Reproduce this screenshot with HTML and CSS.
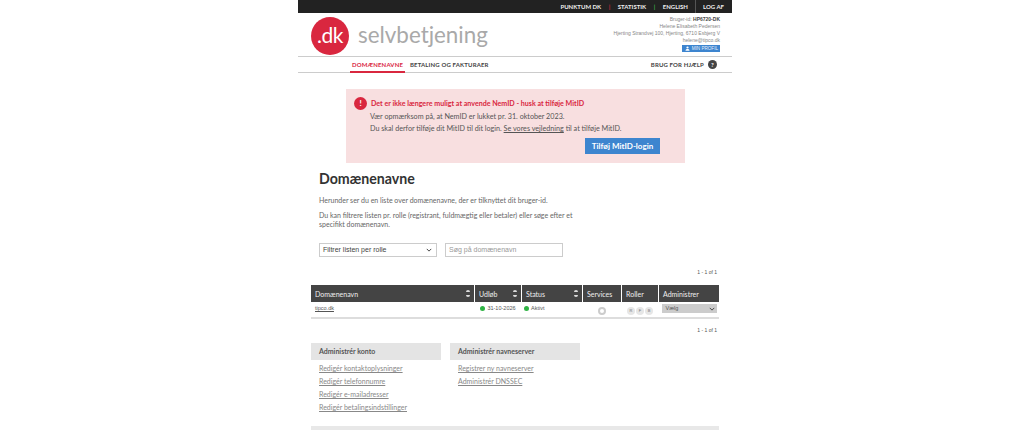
FILE: index.html
```html
<!DOCTYPE html>
<html lang="da">
<head>
    <meta charset="UTF-8">
    <title>Domænenavne - selvbetjening</title>
    <link rel="stylesheet" href="styles.css">
</head>
<body>
    <div class="page">
        <div class="topbar">
            <a href="#">PUNKTUM DK</a><span class="sep sep-red">|</span>
            <a href="#">STATISTIK</a><span class="sep sep-green">|</span>
            <a href="#">ENGLISH</a>
            <a href="#" class="logoff">LOG AF</a>
        </div>

        <div class="header">
            <div class="logo">.dk</div>
            <div class="brand">selvbetjening</div>
            <div class="user">
                <div>Bruger-id: <b>HP6720-DK</b></div>
                <div>Helene Elisabeth Pedersen</div>
                <div>Hjerting Strandvej 100, Hjerting, 6710 Esbjerg V</div>
                <div>helene@tipco.dk</div>
                <a href="#" class="profile">
                    <svg viewBox="0 0 10 10"><circle cx="5" cy="3" r="2.2"/><path d="M1 9.5c0-2.5 1.5-3.5 4-3.5s4 1 4 3.5z"/></svg>
                    MIN PROFIL
                </a>
            </div>
        </div>

        <div class="nav">
            <a href="#" class="active">DOMÆNENAVNE</a>
            <a href="#">BETALING OG FAKTURAER</a>
            <a href="#" class="help">BRUG FOR HJÆLP <span class="help-icon">?</span></a>
        </div>

        <div class="alert">
            <div class="alert-title"><span class="alert-icon">!</span>Det er ikke længere muligt at anvende NemID - husk at tilføje MitID</div>
            <p>Vær opmærksom på, at NemID er lukket pr. 31. oktober 2023.</p>
            <p>Du skal derfor tilføje dit MitID til dit login. <a href="#">Se vores vejledning</a> til at tilføje MitID.</p>
            <div class="alert-actions"><a href="#" class="btn">Tilføj MitID-login</a></div>
        </div>

        <div class="intro">
            <h1>Domænenavne</h1>
            <p>Herunder ser du en liste over domænenavne, der er tilknyttet dit bruger-id.</p>
            <p>Du kan filtrere listen pr. rolle (registrant, fuldmægtig eller betaler) eller søge efter et specifikt domænenavn.</p>
            <div class="filters">
                <div class="filter-select">Filtrer listen per rolle
                    <svg viewBox="0 0 8 5"><path d="M1 1l3 3 3-3" fill="none" stroke="#444" stroke-width="1.3"/></svg>
                </div>
                <div class="filter-input">Søg på domænenavn</div>
            </div>
        </div>

        <div class="pager pager-top">1 - 1 of 1</div>

        <div class="domains">
            <div class="row head">
                <div class="cell">Domænenavn<span class="sort"></span></div>
                <div class="cell">Udløb<span class="sort"></span></div>
                <div class="cell">Status<span class="sort"></span></div>
                <div class="cell">Services</div>
                <div class="cell">Roller</div>
                <div class="cell">Administrer</div>
            </div>
            <div class="row body">
                <div class="cell"><a href="#">tipco.dk</a></div>
                <div class="cell center"><span class="dot"></span>31-10-2026</div>
                <div class="cell"><span class="dot"></span>Aktivt</div>
                <div class="cell center"><span class="service"></span></div>
                <div class="cell center roles"><span>R</span><span>F</span><span>B</span></div>
                <div class="cell center"><div class="choose">Vælg
                    <svg viewBox="0 0 8 5"><path d="M1 1l3 3 3-3" fill="none" stroke="#444" stroke-width="1.3"/></svg>
                </div></div>
            </div>
        </div>

        <div class="pager pager-bottom">1 - 1 of 1</div>

        <div class="admin">
            <div class="admin-col">
                <h2>Administrér konto</h2>
                <a href="#">Redigér kontaktoplysninger</a>
                <a href="#">Redigér telefonnumre</a>
                <a href="#">Redigér e-mailadresser</a>
                <a href="#">Redigér betalingsindstillinger</a>
            </div>
            <div class="admin-col">
                <h2>Administrér navneserver</h2>
                <a href="#">Registrer ny navneserver</a>
                <a href="#">Administrér DNSSEC</a>
            </div>
        </div>

        <div class="footer-band"></div>
    </div>
</body>
</html>
```

FILE: styles.css
```css
* {
    margin: 0;
    padding: 0;
    box-sizing: border-box;
}

html, body {
    height: 430px;
    overflow: hidden;
}

body {
    background-color: #fff;
    color: #555;
    font-family: Lato, "Liberation Sans", sans-serif;
}

a {
    color: inherit;
}

.page {
    width: 434px;
    margin-left: 298px;
    height: 430px;
    overflow: hidden;
}

/* Top bar */
.topbar {
    height: 13px;
    background-color: #222;
    color: #eee;
    display: flex;
    justify-content: flex-end;
    align-items: center;
    font-size: 6px;
    font-weight: 700;
}

.topbar a {
    text-decoration: none;
}

.sep {
    margin: 0 7.5px;
}

.sep-red {
    color: #d9273f;
}

.sep-green {
    color: #3fae49;
}

.logoff {
    border-left: 1px solid #555;
    margin-left: 7px;
    padding: 3px 8px 3px 7px;
    line-height: 7px;
}

/* Header */
.header {
    height: 43px;
    display: flex;
    padding-left: 13px;
}

.logo {
    width: 38px;
    height: 38px;
    margin-top: 4px;
    border-radius: 50%;
    background-color: #d9273f;
    color: #fff;
    font-size: 21px;
    line-height: 35px;
    text-align: center;
    letter-spacing: -0.5px;
}

.brand {
    margin: 5px 0 0 9px;
    color: #a9a9a9;
    font-size: 22.4px;
    line-height: 34px;
}

.user {
    margin-left: auto;
    padding: 3px 12px 0 0;
    font-family: "Liberation Sans", sans-serif;
    font-size: 5px;
    line-height: 7px;
    text-align: right;
    color: #888;
}

.user b {
    color: #444;
}

.profile {
    display: inline-flex;
    align-items: center;
    gap: 2px;
    height: 7px;
    margin-top: 1px;
    padding: 0 2px 0 3px;
    background-color: #3d85cf;
    color: #e6effa;
    font-size: 4.6px;
    text-decoration: none;
}

.profile svg {
    width: 5px;
    height: 5px;
    fill: #fff;
}

/* Nav */
.nav {
    height: 17px;
    border-top: 1px solid #ccc;
    border-bottom: 1px solid #ccc;
    display: flex;
    align-items: stretch;
    padding-left: 52px;
    font-size: 6px;
    font-weight: 700;
    letter-spacing: 0.15px;
    color: #444;
}

.nav a {
    display: flex;
    align-items: center;
    text-decoration: none;
    margin-right: 5px;
}

.nav a.active {
    color: #d9273f;
    border-bottom: 2px solid #d9273f;
    margin-bottom: -1px;
    padding-top: 1px;
    width: 55px;
    justify-content: center;
}

.nav a.help {
    margin: 0 15px 0 auto;
}

.help-icon {
    width: 9px;
    height: 9px;
    margin-left: 4px;
    border-radius: 50%;
    background-color: #444;
    color: #fff;
    font-size: 6px;
    line-height: 9px;
    text-align: center;
}

/* Alert */
.alert {
    width: 339px;
    height: 74px;
    margin: 16px 0 0 48px;
    padding: 8px 8px 0 8px;
    background-color: #f8dfe0;
    font-size: 7.2px;
    color: #555;
}

.alert-title {
    display: flex;
    align-items: center;
    color: #d9273f;
    font-weight: 700;
    height: 13px;
    margin-bottom: 1px;
    font-size: 7.1px;
}

.alert-icon {
    width: 13px;
    height: 13px;
    margin-right: 4px;
    border-radius: 50%;
    background-color: #d9273f;
    color: #fff;
    font-size: 8px;
    line-height: 13px;
    text-align: center;
}

.alert p {
    margin-left: 16px;
    line-height: 12px;
}

.alert-actions {
    margin-top: 3px;
    padding-left: 231px;
}

.btn {
    display: block;
    width: 75px;
    height: 16px;
    background-color: #3d85cf;
    color: #fff;
    font-size: 8px;
    font-weight: 700;
    line-height: 16px;
    text-align: center;
    text-decoration: none;
}

/* Intro */
.intro {
    margin: 7px 0 0 21px;
    width: 270px;
    font-size: 7px;
    line-height: 9px;
    color: #666;
}

.intro h1 {
    color: #333;
    font-size: 14.2px;
    line-height: 18px;
    margin-bottom: 8px;
}

.intro p {
    margin-bottom: 6px;
}

.filters {
    display: flex;
    gap: 8px;
    margin-top: 14px;
    font-family: "Liberation Sans", sans-serif;
}

.filter-select, .filter-input {
    height: 14px;
    border: 1px solid #ccc;
    padding-left: 3px;
    line-height: 12px;
}

.filter-select {
    width: 118px;
    display: flex;
    justify-content: space-between;
    align-items: center;
    padding-right: 4px;
    color: #444;
}

.filter-select svg, .choose svg {
    width: 6px;
    height: 4px;
}

.filter-input {
    width: 118px;
    color: #999;
}

/* Table */
.pager {
    font-family: "Liberation Sans", sans-serif;
    font-size: 5px;
    line-height: 7px;
    color: #555;
    text-align: right;
    padding-right: 15px;
}

.pager-top {
    margin-top: 12px;
}

.pager-bottom {
    margin-top: 8px;
}

.domains {
    margin: 9px 13px 0 13px;
    border-bottom: 2px solid #ddd;
}

.row {
    display: grid;
    grid-template-columns: 163px 46px 60px 38px 36px 1fr;
    column-gap: 1px;
}

.head {
    height: 17px;
    font-size: 7px;
    color: #eee;
}

.head .cell {
    background-color: #444;
    display: flex;
    align-items: center;
    justify-content: space-between;
    padding: 0 4px;
}

.sort {
    width: 4px;
    height: 7px;
    border-top: 2px solid #ddd;
    border-bottom: 2px solid #ddd;
    border-radius: 2px;
}

.body {
    height: 15px;
    font-family: "Liberation Sans", sans-serif;
    font-size: 5.5px;
    color: #555;
}

.body .cell {
    display: flex;
    align-items: flex-start;
    padding: 3px 2px 0;
    line-height: 7px;
}

.body .cell:first-child {
    padding-left: 4px;
}

.body .center {
    justify-content: center;
}

.dot {
    width: 5px;
    height: 5px;
    margin: 1px 2px 0 0;
    border-radius: 50%;
    background-color: #2fb344;
}

.service {
    width: 8px;
    height: 8px;
    border-radius: 50%;
    border: 2px solid #ccc;
    margin-top: 2px;
}

.roles {
    gap: 1px;
}

.roles span {
    width: 8px;
    height: 8px;
    margin-top: 2px;
    border-radius: 50%;
    background-color: #e6e6e6;
    color: #777;
    font-size: 4px;
    line-height: 8px;
    text-align: center;
}

.choose {
    width: 55px;
    height: 9px;
    margin-top: -1px;
    display: flex;
    justify-content: space-between;
    align-items: center;
    padding: 0 2px 0 4px;
    background-color: #ccc;
    color: #555;
}

/* Admin boxes */
.admin {
    display: flex;
    gap: 9px;
    margin: 9px 0 0 13px;
    height: 83px;
}

.admin-col {
    width: 130px;
    font-size: 7px;
    color: #888;
}

.admin-col h2 {
    height: 17px;
    margin-bottom: 2px;
    padding-left: 8px;
    background-color: #e4e4e4;
    color: #555;
    font-size: 7px;
    font-weight: 700;
    line-height: 17px;
}

.admin-col a {
    display: block;
    padding-left: 8px;
    line-height: 13px;
}

.footer-band {
    height: 4px;
    margin: 0 13px;
    background-color: #e8e8e8;
}
```
